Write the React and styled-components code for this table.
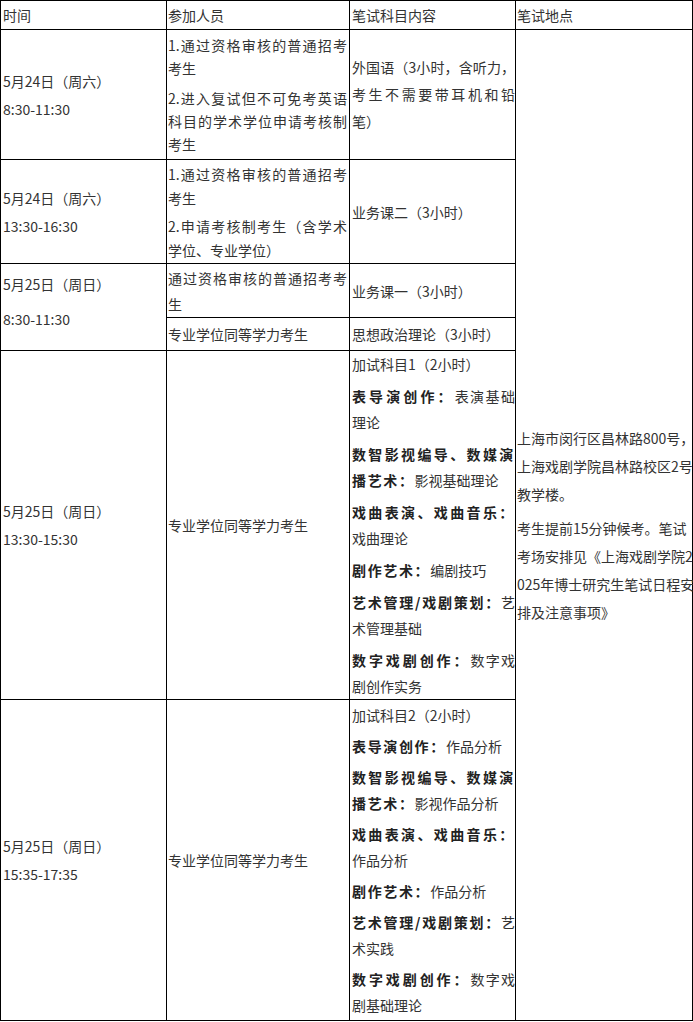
import React from 'react';
import styled, { createGlobalStyle } from 'styled-components';

const GlobalStyle = createGlobalStyle`
  body {
    margin: 0;
    background: #fff;
  }
`;

const Table = styled.table`
  width: 692px;
  table-layout: fixed;
  border-collapse: collapse;
  font-family: 'Noto Sans CJK SC', 'Noto Sans', sans-serif;
  font-size: 14px;
  color: #333;
  text-spacing-trim: space-all;
  text-autospace: no-autospace;
`;

const Row = styled.tr`
  height: ${(p) => p.$h}px;
`;

const Cell = styled.td`
  border: 1px solid #000;
  padding: 0 ${(p) => p.$pr ?? 1}px ${(p) => p.$pb ?? 0}px ${(p) => p.$pl ?? 1}px;
  vertical-align: middle;
  text-align: justify;
  line-height: 22px;
`;

// paragraphs inside a cell: the gap sits below each one except the last
const Para = styled.p`
  margin: 0 0 ${(p) => p.$gap ?? 6}px;
  line-height: ${(p) => p.$lh ?? 22}px;
  white-space: ${(p) => (p.$nowrap ? 'nowrap' : 'normal')};
  &:last-child {
    margin-bottom: 0;
  }
`;

const Strong = styled.b`
  font-weight: 700;
  letter-spacing: 1.65px;
  color: #222;
`;

// time column: date on one line, hours on the next
const TimeCell = ({ date, hours, gap = 6, pb = 0, rowSpan }) => (
  <Cell rowSpan={rowSpan} $pl={2} $pb={pb}>
    <Para $gap={gap}>{date}</Para>
    <Para>{hours}</Para>
  </Cell>
);

// bold subject title followed by its content
const Subject = ({ title, text, gap = 5 }) => (
  <Para $lh={26} $gap={gap}>
    <Strong>{title}</Strong>
    {text}
  </Para>
);

const App = () => {
  return (
    <>
      <GlobalStyle />
      <Table>
        <colgroup>
          <col style={{ width: 166 }} />
          <col style={{ width: 183 }} />
          <col style={{ width: 166 }} />
          <col style={{ width: 177 }} />
        </colgroup>
        <tbody>
          <Row $h={29}>
            <Cell $pl={2}>时间</Cell>
            <Cell>参加人员</Cell>
            <Cell $pl={2}>笔试科目内容</Cell>
            <Cell>笔试地点</Cell>
          </Row>

          <Row $h={130}>
            <TimeCell date='5月24日（周六）' hours='8:30-11:30' />
            <Cell $pr={2}>
              <Para $lh={23} $gap={7}>1.通过资格审核的普通招考考生</Para>
              <Para $lh={23}>2.进入复试但不可免考英语科目的学术学位申请考核制考生</Para>
            </Cell>
            <Cell $pl={2} $pr={0}>
              <Para $lh={27}>外国语（3小时，含听力，考生不需要带耳机和铅笔）</Para>
            </Cell>
            <Cell rowSpan={6} $pr={1}>
              <Para $lh={28} $gap={6} $nowrap>
                上海市闵行区昌林路800号，
                <br />
                上海戏剧学院昌林路校区2号
                <br />
                教学楼。
              </Para>
              <Para $lh={28} $nowrap>
                考生提前15分钟候考。笔试
                <br />
                考场安排见《上海戏剧学院2
                <br />
                025年博士研究生笔试日程安
                <br />
                排及注意事项》
              </Para>
            </Cell>
          </Row>

          <Row $h={104}>
            <TimeCell date='5月24日（周六）' hours='13:30-16:30' />
            <Cell $pr={2}>
              <Para $lh={24} $gap={4}>1.通过资格审核的普通招考考生</Para>
              <Para $lh={24}>2.申请考核制考生（含学术学位、专业学位）</Para>
            </Cell>
            <Cell $pl={2} $pr={0}>业务课二（3小时）</Cell>
          </Row>

          <Row $h={54}>
            <TimeCell
              rowSpan={2}
              gap={13}
              pb={12}
              date='5月25日（周日）'
              hours='8:30-11:30'
            />
            <Cell $pr={2}>
              <Para $lh={26}>通过资格审核的普通招考考生</Para>
            </Cell>
            <Cell $pl={2} $pr={0}>业务课一（3小时）</Cell>
          </Row>

          <Row $h={33}>
            <Cell>专业学位同等学力考生</Cell>
            <Cell $pl={2} $pr={0}>思想政治理论（3小时）</Cell>
          </Row>

          <Row $h={349}>
            <TimeCell date='5月25日（周日）' hours='13:30-15:30' />
            <Cell>专业学位同等学力考生</Cell>
            <Cell $pl={2} $pr={0}>
              <Para $lh={26} $gap={6}>加试科目1（2小时）</Para>
              <Subject gap={6} title='表导演创作：' text='表演基础理论' />
              <Subject gap={6} title='数智影视编导、数媒演播艺术：' text='影视基础理论' />
              <Subject gap={6} title='戏曲表演、戏曲音乐：' text='戏曲理论' />
              <Subject gap={6} title='剧作艺术：' text='编剧技巧' />
              <Subject gap={6} title='艺术管理/戏剧策划：' text='艺术管理基础' />
              <Subject gap={6} title='数字戏剧创作：' text='数字戏剧创作实务' />
            </Cell>
          </Row>

          <Row $h={321}>
            <TimeCell date='5月25日（周日）' hours='15:35-17:35' />
            <Cell>专业学位同等学力考生</Cell>
            <Cell $pl={2} $pr={0}>
              <Para $lh={26} $gap={5}>加试科目2（2小时）</Para>
              <Subject title='表导演创作：' text='作品分析' />
              <Subject title='数智影视编导、数媒演播艺术：' text='影视作品分析' />
              <Subject title='戏曲表演、戏曲音乐：' text='作品分析' />
              <Subject title='剧作艺术：' text='作品分析' />
              <Subject title='艺术管理/戏剧策划：' text='艺术实践' />
              <Subject title='数字戏剧创作：' text='数字戏剧基础理论' />
            </Cell>
          </Row>
        </tbody>
      </Table>
    </>
  );
};

export default App;
